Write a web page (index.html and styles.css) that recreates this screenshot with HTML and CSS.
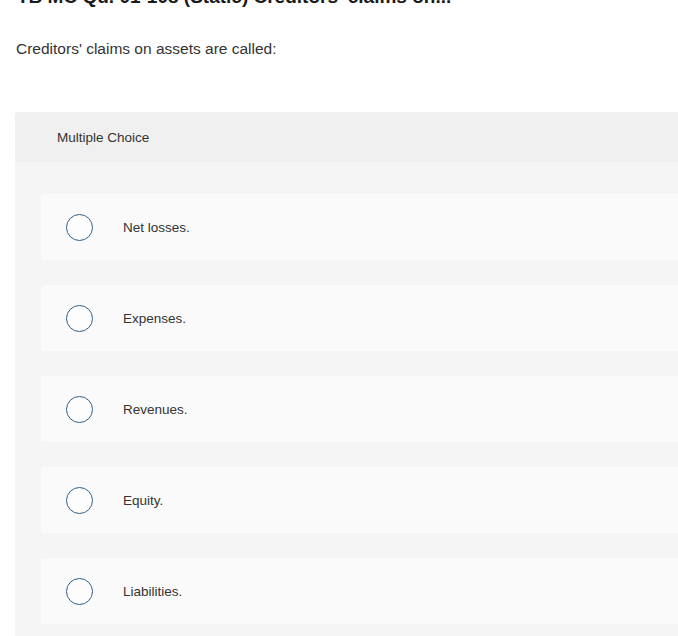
FILE: index.html
```html
<!DOCTYPE html>
<html>
<head>
<meta charset="utf-8">
<link rel="stylesheet" href="styles.css">
</head>
<body>
<div class="page">
  <h1 class="title">TB MC Qu. 01-108 (Static) Creditors' claims on...</h1>
  <p class="question">Creditors' claims on assets are called:</p>
  <div class="panel">
    <div class="panel-head">Multiple Choice</div>
    <div class="panel-body">
      <div class="option"><span class="radio"></span><span class="label">Net losses.</span></div>
      <div class="option"><span class="radio"></span><span class="label">Expenses.</span></div>
      <div class="option"><span class="radio"></span><span class="label">Revenues.</span></div>
      <div class="option"><span class="radio"></span><span class="label">Equity.</span></div>
      <div class="option"><span class="radio"></span><span class="label">Liabilities.</span></div>
    </div>
  </div>
</div>
</body>
</html>
```
FILE: styles.css
```css
html, body {
  margin: 0;
  padding: 0;
  background: #ffffff;
  overflow: hidden;
}
body {
  font-family: "Liberation Sans", Arial, sans-serif;
  color: #333333;
}
.page {
  display: flex;
  flex-direction: column;
}
.title {
  margin: -18px 0 0 17px;
  font-size: 19px;
  line-height: 30px;
  font-weight: 700;
  color: #1a1a1a;
  white-space: nowrap;
}
.question {
  margin: 25px 0 0 16px;
  font-size: 15.5px;
  line-height: 24px;
  color: #333333;
}
.panel {
  margin: 51px 0 0 15px;
  border-top-left-radius: 3px;
  overflow: hidden;
}
.panel-head {
  background: #f0f0f0;
  height: 50px;
  display: flex;
  align-items: center;
  padding-left: 42px;
  font-size: 13.5px;
  color: #333333;
}
.panel-body {
  background: #f5f5f5;
  padding: 32px 0 20px 26px;
  display: flex;
  flex-direction: column;
  gap: 25px;
}
.option {
  background: #fafafa;
  height: 66px;
  border-radius: 3px 0 0 3px;
  display: flex;
  align-items: center;
  padding-left: 25px;
}
.radio {
  width: 25px;
  height: 25px;
  border: 1.5px solid #2f5f8f;
  border-radius: 50%;
  background: #fdfdfd;
  flex: none;
}
.label {
  margin-left: 30px;
  font-size: 13.5px;
  color: #333333;
}
```
